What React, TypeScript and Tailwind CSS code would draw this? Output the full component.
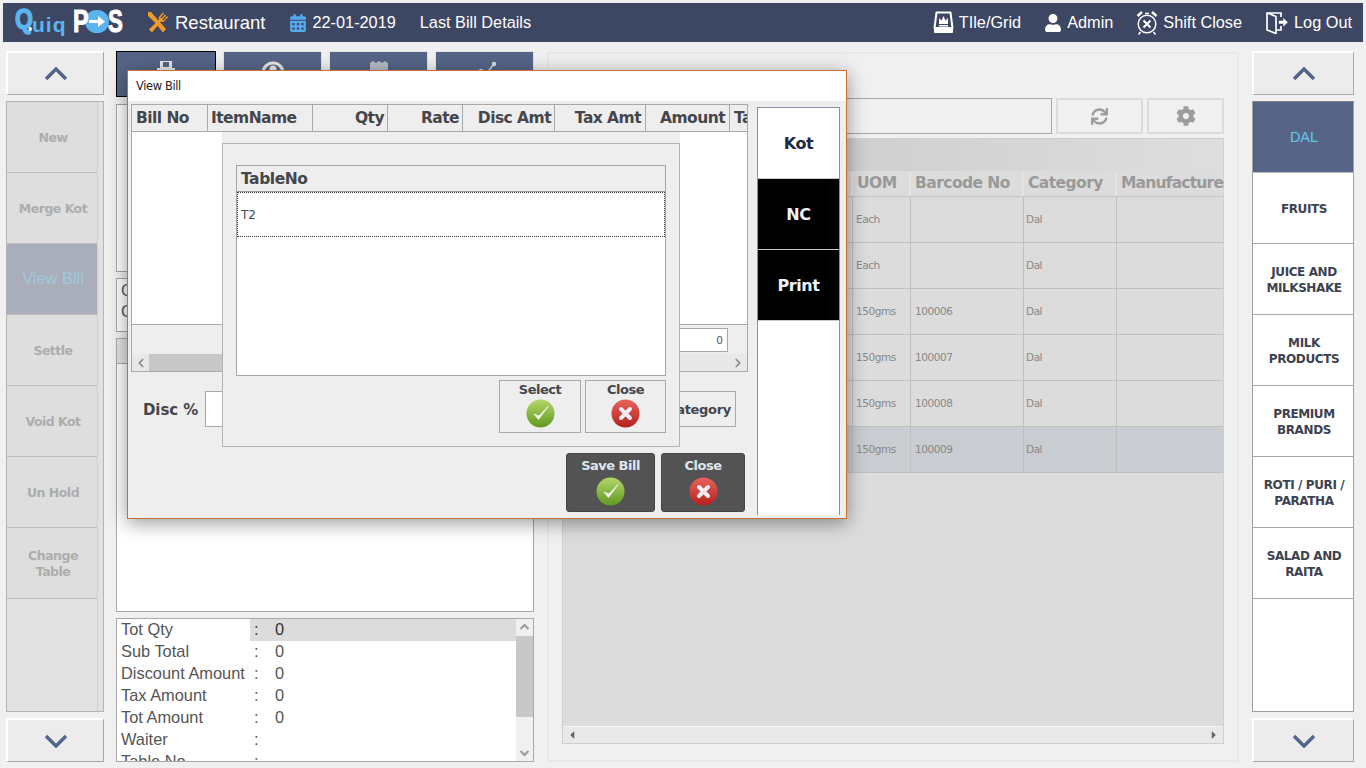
import React from "react";
import { ChevronLeft, ChevronRight } from "lucide-react";
import { FaCalendarAlt, FaUser, FaSync, FaCog, FaCaretLeft, FaCaretRight } from "react-icons/fa";

const leftButtons = ["New", "Merge Kot", "View Bill", "Settle", "Void Kot", "Un Hold", "Change Table"];
const rightButtons = ["DAL", "FRUITS", "JUICE AND MILKSHAKE", "MILK PRODUCTS", "PREMIUM BRANDS", "ROTI / PURI / PARATHA", "SALAD AND RAITA"];
const totals = [
  { label: "Tot Qty", value: "0" },
  { label: "Sub Total", value: "0" },
  { label: "Discount Amount", value: "0" },
  { label: "Tax Amount", value: "0" },
  { label: "Tot Amount", value: "0" },
  { label: "Waiter", value: "" },
  { label: "Table No", value: "" },
];
const products = [
  { uom: "Each", code: "" },
  { uom: "Each", code: "" },
  { uom: "150gms", code: "100006" },
  { uom: "150gms", code: "100007" },
  { uom: "150gms", code: "100008" },
  { uom: "150gms", code: "100009" },
];
const billCols = [
  { name: "Bill No", cls: "w-[76px] pl-[4px]" },
  { name: "ItemName", cls: "w-[105px] pl-[3px]" },
  { name: "Qty", cls: "w-[75px] text-right pr-[3px]" },
  { name: "Rate", cls: "w-[75px] text-right pr-[3px]" },
  { name: "Disc Amt", cls: "w-[92px] text-right pr-[3px]" },
  { name: "Tax Amt", cls: "w-[91px] text-right pr-[4px]" },
  { name: "Amount", cls: "w-[84px] text-right pr-[4px]" },
];

const tahoma = "font-['DejaVu_Sans',sans-serif]";

const OkIcon = ({ id }: { id: string }) => (
  <svg width="29" height="29" viewBox="0 0 29 29">
    <defs>
      <linearGradient id={id} x1="0" y1="0" x2="0" y2="1">
        <stop offset="0" stopColor="#b5d66a" />
        <stop offset="1" stopColor="#5f9a1e" />
      </linearGradient>
    </defs>
    <circle cx="14.500" cy="14.500" r="14" fill={`url(#${id})`} />
    <path d="M8 15l4.500 5.500L22 7.500l-9 9.500z" fill="#f4f7ef" stroke="#e8efe0" strokeWidth="1" strokeLinejoin="round" />
  </svg>
);

const CancelIcon = ({ id }: { id: string }) => (
  <svg width="29" height="29" viewBox="0 0 29 29">
    <defs>
      <linearGradient id={id} x1="0" y1="0" x2="0" y2="1">
        <stop offset="0" stopColor="#e8645c" />
        <stop offset="1" stopColor="#b51f1f" />
      </linearGradient>
    </defs>
    <circle cx="14.500" cy="14.500" r="14" fill={`url(#${id})`} />
    <path d="M10 10l9 9M19 10l-9 9" stroke="#f3eef2" strokeWidth="4" strokeLinecap="round" />
  </svg>
);

const Logo = () => (
  <div className="flex items-center w-[108px] h-[39px] font-['Liberation_Sans',sans-serif] font-bold leading-none">
    <span className="relative w-[17px] text-[27px] text-[#5cb4ee] [-webkit-text-stroke:1.5px_#5cb4ee] origin-left scale-x-[0.85] mt-[-6px]">
      Q
      <span className="absolute right-[-3px] bottom-[2px] w-[4px] h-[4px] rounded-full bg-white" />
    </span>
    <span className="text-[21px] text-[#5cb4ee] mt-[4px] tracking-[1px] w-[41px]">uiq</span>
    <span className="w-[12px] text-[31px] text-white [-webkit-text-stroke:1px_#fff] origin-left scale-x-[0.75] mt-[-2px]">P</span>
    <span className="w-[24px] h-[23px] rounded-full bg-[#5cb4ee] flex items-center justify-center shrink-0 mt-[-2px]">
      <svg width="17" height="13" viewBox="0 0 17 13">
        <path d="M0 5h9V1l7 5.500-7 5.500V8H0z" fill="#fff" />
      </svg>
    </span>
    <span className="w-[14px] text-[31px] text-white [-webkit-text-stroke:1px_#fff] origin-left scale-x-[0.72] -ml-[1px] mt-[-2px]">S</span>
  </div>
);

const ForkKnife = () => (
  <svg width="22" height="23" viewBox="0 0 22 23" fill="#f09a2a">
    <path d="M1 1l3 0 15 17-3 3.500L7 10.500 1 5z" />
    <path d="M2 18.500L12 8.500l-.5-2L16 1.500l1 1-3.500 4 1 1L18 3.500l1 1-3.500 4 1 1L20 5l1 1-4.500 5-2.500-.5L5 21.500z" />
  </svg>
);

const TileIcon = () => (
  <svg width="21" height="23" viewBox="0 0 21 23">
    <path d="M3.500 1.500h14L19.500 17h-18z" fill="#3d4663" stroke="#fff" strokeWidth="2" strokeLinejoin="round" />
    <path d="M1 18h19v3q0 1-1 1H2q-1 0-1-1z" fill="#fff" />
    <path d="M6 13V7l2.500 2.500L10.500 5l2 4.500L15 7v6z" fill="#fff" />
    <path d="M6 14h9v1.500H6z" fill="#fff" />
  </svg>
);

const AlarmIcon = () => (
  <svg width="22" height="25" viewBox="0 0 22 25" fill="none" stroke="#fff" strokeWidth="1.500">
    <circle cx="11" cy="14" r="8.800" />
    <path d="M7.500 10.500l7 7M14.500 10.500l-7 7" strokeWidth="2" />
    <path d="M1.500 6L6 2 M3 3h0M20.500 6L16 2" strokeWidth="2.500" />
    <path d="M9 3.500h4" />
    <path d="M4.500 22l-2 2.500M17.500 22l2 2.500" />
  </svg>
);

const DoorIcon = () => (
  <svg width="22" height="22" viewBox="0 0 22 22" fill="none" stroke="#fff" strokeWidth="1.700">
    <path d="M15 5V1H1v17l9 3.500V4.500L1.500 1" />
    <path d="M10 18h5v-4" />
    <path d="M13 9h4.500V6.500l4 3.800-4 3.800V11.500H13z" fill="#fff" strokeWidth="0.500" />
  </svg>
);

const Chevron = ({ down }: { down?: boolean }) => (
  <svg width="24" height="14" viewBox="0 0 24 14" fill="none" stroke="#54658a" strokeWidth="3.500">
    <path d={down ? "M2 2l10 10L22 2" : "M2 12L12 2l10 10"} />
  </svg>
);

const NavItem = ({ icon, label, gap, ml }: { icon: React.ReactNode; label: string; gap: string; ml: string }) => (
  <div className={`flex items-center ${gap} ${ml}`}>
    {icon}
    <span className="text-[16.3px] text-white whitespace-nowrap">{label}</span>
  </div>
);

const Header = () => (
  <div className="h-[39px] mx-[3px] mt-[3px] bg-[#3d4663] flex items-center pl-[12px] font-['Liberation_Sans',sans-serif]">
    <Logo />
    <span className="ml-[24px] mr-[6px]">
      <ForkKnife />
    </span>
    <span className="text-[18.5px] text-white">Restaurant</span>
    <FaCalendarAlt className="ml-[23px] mr-[6px] text-[#55aaec]" size={18} />
    <span className="text-[16.3px] text-white">22-01-2019</span>
    <span className="text-[16.3px] text-white ml-[24px]">Last Bill Details</span>
    <div className="flex items-center ml-auto pr-[11px]">
      <NavItem icon={<TileIcon />} label="TIle/Grid" gap="gap-[5px]" ml="" />
      <NavItem icon={<FaUser color="#fff" size={18} />} label="Admin" gap="gap-[5px]" ml="ml-[23px]" />
      <NavItem icon={<AlarmIcon />} label="Shift Close" gap="gap-[5px]" ml="ml-[23px]" />
      <NavItem icon={<DoorIcon />} label="Log Out" gap="gap-[6px]" ml="ml-[24px]" />
    </div>
  </div>
);

const ArrowButton = ({ down }: { down?: boolean }) => (
  <div className="h-[44px] bg-[#ececec] border-t-2 border-l-2 border-t-white border-l-white border-r border-b border-r-[#a8a8a8] border-b-[#a8a8a8] flex items-center justify-center shrink-0">
    <Chevron down={down} />
  </div>
);

const LeftColumn = () => (
  <div className="w-[98px] ml-[6px] flex flex-col gap-[6px] h-[711px] mt-[9px]">
    <ArrowButton />
    <div className="flex-1 border border-[#b4b4b4] bg-[#e1e1e1] flex min-h-0">
      <div className="flex-1 flex flex-col">
        {leftButtons.map((b) => (
          <div
            key={b}
            className={
              b === "View Bill"
                ? "h-[71px] bg-[#a9aeba] border-b border-[#bdbdbd] flex items-center justify-center text-center text-[16.4px] text-[#9fc9de] pl-[2px] pb-[2px] font-['Liberation_Sans',sans-serif]"
                : `h-[71px] bg-[#dedede] border-b border-[#bdbdbd] flex items-center justify-center text-center text-[12.5px] tracking-[-0.5px] leading-[16px] font-bold text-[#adadad] pl-[8px] pr-[6px] pt-[2px] ${tahoma}`
            }
          >
            {b}
          </div>
        ))}
      </div>
      <div className="w-[6px] bg-[#e1e1e1] border-l border-[#d0d0d0]" />
    </div>
    <ArrowButton down />
  </div>
);

const TopTab = ({ active, children }: { active?: boolean; children: React.ReactNode }) => (
  <div
    className={
      active
        ? "w-[100px] h-[46px] bg-[#566587] border border-black flex justify-center pt-[7px]"
        : "flex-1 h-[46px] bg-[#566587] border-t border-x border-[#e4e4e4] flex justify-center pt-[7px]"
    }
  >
    {children}
  </div>
);

const MiddleColumn = () => (
  <div className="w-[418px] ml-[12px] mt-[9px] flex flex-col h-[711px] font-['Liberation_Sans',sans-serif]">
    <div className="flex gap-[7px] shrink-0">
      <TopTab active>
        <svg width="22" height="26" viewBox="0 0 22 26" fill="#e8e8e8">
          <path d="M5 2h12v7h3v15H2V9h3zM8 3v5h6V3z" fillRule="evenodd" />
        </svg>
      </TopTab>
      <TopTab>
        <svg width="28" height="28" viewBox="0 0 28 28" fill="none" stroke="#e8e8e8" strokeWidth="3">
          <circle cx="14" cy="14" r="10" />
          <circle cx="14" cy="10" r="2" fill="#e8e8e8" />
        </svg>
      </TopTab>
      <TopTab>
        <svg width="20" height="24" viewBox="0 0 20 24" fill="#b8bcc8">
          <path d="M1 4l3-2 3 2 3-2 3 2 3-2 3 2v20H1z" />
        </svg>
      </TopTab>
      <TopTab>
        <svg width="24" height="24" viewBox="0 0 24 24" fill="none" stroke="#d8dae0" strokeWidth="1.500">
          <path d="M2 17l6-5 5 3 8-10" />
          <circle cx="21" cy="5" r="1.500" fill="#d8dae0" />
          <circle cx="8" cy="12" r="1.500" fill="#d8dae0" />
        </svg>
      </TopTab>
    </div>
    <div className="h-[168px] mt-[7px] bg-white border border-[#a8a8a8] shrink-0" />
    <div className="h-[54px] mt-[6px] bg-white border border-[#a8a8a8] shrink-0 pl-[4px] pt-[1px] text-[16.4px] leading-[21px] text-[#555]">
      <div>C</div>
      <div>C</div>
    </div>
    <div className="h-[26px] mt-[6px] bg-[#e4e4e4] border border-[#a8a8a8] shrink-0" />
    <div className="flex-1 bg-white border border-t-0 border-[#a8a8a8] min-h-0" />
    <div className="h-[144px] mt-[6px] bg-white border border-[#a8a8a8] flex shrink-0 overflow-hidden">
      <div className="flex-1 flex flex-col">
        {totals.map((t, i) => (
          <div key={t.label} className="h-[22px] flex items-center text-[16.4px] text-[#555] shrink-0">
            <span className="w-[133px] pl-[4px] pb-[2px] shrink-0 whitespace-nowrap">{t.label}</span>
            <div className={i === 0 ? "flex-1 flex h-full items-center pb-[2px] bg-[#dcdcdc] text-[#333]" : "flex-1 flex h-full items-center pb-[2px]"}>
              <span className="w-[25px] pl-[4px]">:</span>
              <span>{t.value}</span>
            </div>
          </div>
        ))}
      </div>
      <div className="w-[17px] bg-[#f0f0f0] flex flex-col items-center shrink-0">
        <svg width="17" height="17" viewBox="0 0 17 17" fill="none" stroke="#9a9a9a" strokeWidth="2"><path d="M4.500 10l4-4 4 4" /></svg>
        <div className="w-full h-[81px] bg-[#c8c8c8]" />
        <div className="flex-1" />
        <svg width="17" height="17" viewBox="0 0 17 17" fill="none" stroke="#9a9a9a" strokeWidth="2"><path d="M4.500 7l4 4 4-4" /></svg>
      </div>
    </div>
  </div>
);

const ProductPanel = () => (
  <div className="w-[692px] h-[710px] ml-[13px] mt-[10px] border-2 border-[#e8e8e8] flex flex-col px-[13px] pt-[44px] pb-[16px]">
    <div className="flex gap-[4px] h-[36px] shrink-0">
      <div className="flex-1 border border-[#a8a8a8]" />
      <div className="w-[87px] border-2 border-[#dcdcdc] flex items-center justify-center">
        <FaSync size={17} className="text-[#9c9c9c]" />
      </div>
      <div className="w-[77px] border-2 border-[#dcdcdc] flex items-center justify-center">
        <FaCog size={20} className="text-[#9c9c9c]" />
      </div>
    </div>
    <div className="flex-1 mt-[4px] border border-[#cfcfcf] bg-[#dcdcdc] flex flex-col min-h-0 font-['DejaVu_Sans',sans-serif]">
      <div className="h-[32px] bg-gradient-to-r from-[#c4c4c4] to-[#dedede] shrink-0" />
      <div className="flex h-[25px] mt-[1px] shrink-0 border-b border-[#c4c4c4] text-[15.5px] tracking-[-0.55px] font-bold text-[#999] leading-[23px]">
        <div className="w-[290px] border-r-2 border-[#e4e4e4]" />
        <div className="w-[58px] border-r-2 border-[#e4e4e4] pl-[4px] whitespace-nowrap">UOM</div>
        <div className="w-[113px] border-r-2 border-[#e4e4e4] pl-[4px] whitespace-nowrap">Barcode No</div>
        <div className="w-[93px] border-r-2 border-[#e4e4e4] pl-[4px] whitespace-nowrap">Category</div>
        <div className="flex-1 min-w-0 pl-[4px] whitespace-nowrap tracking-[-0.8px]">Manufacture</div>
      </div>
      {products.map((p, i) => (
        <div
          key={i}
          className={
            i === 5
              ? "flex h-[46px] shrink-0 border-b border-[#c0c0c0] text-[10.5px] tracking-[-0.45px] text-[#888] items-center bg-[#c9cdd1]"
              : "flex h-[46px] shrink-0 border-b border-[#c0c0c0] text-[10.5px] tracking-[-0.45px] text-[#888] items-center"
          }
        >
          <div className="w-[290px] h-full border-r border-[#c0c0c0]" />
          <div className="w-[58px] h-full border-r border-[#c0c0c0] pl-[3px] flex items-center">{p.uom}</div>
          <div className="w-[113px] h-full border-r border-[#c0c0c0] pl-[4px] flex items-center">{p.code}</div>
          <div className="w-[93px] h-full border-r border-[#c0c0c0] pl-[2px] flex items-center">Dal</div>
          <div className="flex-1" />
        </div>
      ))}
      <div className="flex-1" />
      <div className="h-[17px] shrink-0 bg-[#e9e9e9] flex items-center justify-between px-[3px] border-t border-[#f4f4f4]">
        <FaCaretLeft size={12} className="text-[#666]" />
        <FaCaretRight size={12} className="text-[#666]" />
      </div>
    </div>
  </div>
);

const RightColumn = () => (
  <div className="w-[102px] ml-[13px] mt-[9px] flex flex-col gap-[6px] h-[711px]">
    <ArrowButton />
    <div className="flex-1 border border-[#a0a0a0] border-t-[#808080] bg-white min-h-0 flex flex-col">
      {rightButtons.map((b) => (
        <div
          key={b}
          className={
            b === "DAL"
              ? "h-[71px] bg-[#566587] border-b border-[#bdbdbd] flex items-center justify-center text-[14.5px] text-[#62c8ea] pl-[2px] pt-[2px] font-['Liberation_Sans',sans-serif]"
              : `h-[71px] bg-white border-b border-[#a8a8a8] flex items-center justify-center text-center text-[12px] tracking-[-0.4px] leading-[16px] font-bold text-[#3c4250] pl-[6px] pr-[4px] pt-[2px] ${tahoma}`
          }
        >
          {b}
        </div>
      ))}
    </div>
    <ArrowButton down />
  </div>
);

const SmallAction = ({ label, w, children }: { label: string; w: string; children: React.ReactNode }) => (
  <div className={`${w} h-[53px] border border-[#a8a8a8] flex flex-col items-center pt-[1px] gap-[1px] text-[13px] tracking-[-0.5px] leading-[16px] font-bold text-[#45464c]`}>
    <span>{label}</span>
    {children}
  </div>
);

const DarkAction = ({ label, w, children }: { label: string; w: string; children: React.ReactNode }) => (
  <div className={`${w} h-[59px] rounded-[3px] bg-[#535353] border border-[#444] flex flex-col items-center pt-[3px] gap-[2px] text-[13px] tracking-[-0.5px] leading-[18px] font-bold text-[#dfe6ee]`}>
    <span>{label}</span>
    {children}
  </div>
);

const TableDialog = () => (
  <div className="absolute left-[94px] top-[61px] w-[458px] h-[315px] bg-[#eeeeee]">
    <div className="mt-[11px] h-[304px] border border-[#b4b4b4] pt-[21px] px-[13px]">
      <div className="h-[211px] border border-[#a4a4a4] bg-white flex flex-col">
        <div className="h-[26px] bg-[#eeeeee] border-b border-[#9a9a9a] pl-[4px] text-[15.5px] tracking-[-0.45px] leading-[26px] font-bold text-[#45464c] shrink-0">
          TableNo
        </div>
        <div className="h-[45px] border border-dotted border-[#333] flex items-center pl-[3px] text-[12px] text-[#4a4a55] shrink-0">
          T2
        </div>
      </div>
      <div className="flex justify-end gap-[4px] mt-[4px]">
        <SmallAction label="Select" w="w-[82px]">
          <OkIcon id="ok-a" />
        </SmallAction>
        <SmallAction label="Close" w="w-[81px]">
          <CancelIcon id="no-a" />
        </SmallAction>
      </div>
    </div>
  </div>
);

const BillModal = () => (
  <div className={`absolute left-[127px] top-[70px] w-[720px] h-[449px] bg-[#eeeeee] border border-[#c86f2f] shadow-[0_4px_18px_rgba(0,0,0,0.4)] ${tahoma}`}>
    <div className="h-[30px] bg-white pl-[8px] text-[11.5px] tracking-[-0.4px] leading-[30px] text-[#222]">View Bill</div>
    <div className="flex items-start">
      <div className="w-[617px] ml-[3px] mt-[3px] flex flex-col">
        <div className="h-[268px] border border-[#a8a8a8] bg-[#eeeeee] flex flex-col overflow-hidden">
          <div className="h-[27px] flex border-b border-[#a8a8a8] text-[15.5px] tracking-[-0.55px] font-bold text-[#45464c] leading-[26px] shrink-0">
            {billCols.map((c) => (
              <div key={c.name} className={`${c.cls} border-r border-[#a8a8a8] whitespace-nowrap`}>
                {c.name}
              </div>
            ))}
            <div className="flex-1 pl-[4px] overflow-hidden whitespace-nowrap">Tax</div>
          </div>
          <div className="h-[193px] bg-white border-b border-[#a8a8a8] shrink-0" />
          <div className="flex justify-end pt-[3px] pr-[19px] h-[29px] shrink-0">
            <div className="w-[49px] h-[24px] bg-white border border-[#a8a8a8] text-right pr-[4px] text-[10.5px] leading-[22px] text-[#555]">0</div>
          </div>
          <div className="h-[17px] bg-[#e8e8e8] flex items-center shrink-0">
            <div className="w-[17px] flex justify-center">
              <ChevronLeft size={14} strokeWidth={3} className="text-[#8a8a8a]" />
            </div>
            <div className="w-[200px] h-full bg-[#c8c8c8]" />
            <ChevronRight size={14} strokeWidth={3} className="text-[#8a8a8a] ml-auto mr-[2px]" />
          </div>
        </div>
        <div className="flex items-center h-[36px] mt-[19px] pl-[12px] pr-[12px]">
          <span className="text-[15px] tracking-[-0.1px] font-bold text-[#45464c] pt-[2px]">Disc %</span>
          <div className="w-[60px] h-full ml-[7px] bg-white border border-[#a8a8a8]" />
          <div className="ml-auto w-[120px] h-full border border-[#a8a8a8] flex items-center justify-end pr-[4px] pt-[2px] text-[13px] tracking-[-0.3px] font-bold text-[#45464c]">
            Category
          </div>
        </div>
        <div className="flex justify-end gap-[6px] mt-[26px] pr-[3px]">
          <DarkAction label="Save Bill" w="w-[89px]">
            <OkIcon id="ok-b" />
          </DarkAction>
          <DarkAction label="Close" w="w-[84px]">
            <CancelIcon id="no-b" />
          </DarkAction>
        </div>
      </div>
      <div className="w-[83px] h-[408px] ml-[9px] mt-[6px] border border-b-0 border-[#8a90a0] bg-white flex flex-col">
        <div className="h-[71px] flex items-center justify-center text-[16px] tracking-[-0.4px] font-bold text-[#1f2a44] bg-white border-b border-[#c8cad0] pt-[2px]">Kot</div>
        <div className="h-[71px] flex items-center justify-center text-[16px] tracking-[-0.4px] font-bold text-[#eef4ff] bg-black border-b border-[#c8cad0] pt-[2px]">NC</div>
        <div className="h-[71px] flex items-center justify-center text-[16px] tracking-[-0.4px] font-bold text-[#eef4ff] bg-black border-b border-[#c8cad0] pt-[2px]">Print</div>
      </div>
    </div>
    <TableDialog />
  </div>
);

export default function App() {
  return (
    <div className="relative w-[1366px] h-[768px] overflow-hidden bg-[#f0f0f0]">
      <Header />
      <div className="flex">
        <LeftColumn />
        <MiddleColumn />
        <ProductPanel />
        <RightColumn />
      </div>
      <BillModal />
    </div>
  );
}
